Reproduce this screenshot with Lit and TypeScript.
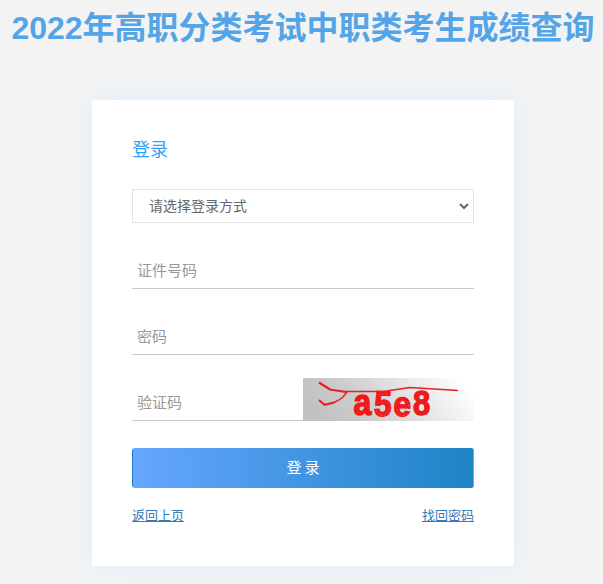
import { LitElement, html, css } from "lit";
import { customElement } from "lit/decorators.js";

@customElement("captcha-image")
class CaptchaImage extends LitElement {
  static styles = css`
    :host {
      display: block;
      width: 171px;
      height: 43px;
    }
    svg {
      display: block;
      overflow: visible;
    }
    .code {
      font-family: "Liberation Sans", Arial, sans-serif;
      font-weight: bold;
      fill: #f01818;
      stroke: #f01818;
      stroke-width: 1.2;
    }
    .speckle {
      stroke: #d8a0a0;
      stroke-width: 0.7;
      stroke-dasharray: 1 2.5;
      fill: none;
    }
    .scratch {
      stroke: #e82020;
      fill: none;
    }
  `;

  render() {
    return html`
      <svg width="171" height="43" viewBox="0 0 171 43">
        <defs>
          <linearGradient id="fade" x1="0" y1="0.3" x2="1" y2="0.1">
            <stop offset="0" stop-color="#c2c2c2" />
            <stop offset="0.25" stop-color="#cccccc" />
            <stop offset="0.6" stop-color="#e6e6e6" />
            <stop offset="0.95" stop-color="#ffffff" />
          </linearGradient>
        </defs>
        <rect width="171" height="43" fill="url(#fade)" />
        <g class="code">
          <text transform="translate(50.500 36.500) scale(1 1.180)" font-size="32">a</text>
          <text transform="translate(70.500 37.500) rotate(3) scale(1.050 1.180)" font-size="30">5</text>
          <text transform="translate(90 37.500) rotate(3) scale(1.050 1.150)" font-size="30">e</text>
          <text transform="translate(110 36.500) scale(1 1.150)" font-size="31">8</text>
        </g>
        <path class="speckle" d="M76 17l9-2M75 25l7-2 5 5-3 8-9 2M92 27l7-5 7 4-2 5-10 1 3 6 8-1M73 33l6 4" />
        <path class="scratch" stroke-width="2.200" d="M16 4.500L27 11.500L43 14" />
        <path class="scratch" stroke-width="1.500" d="M40 13.500H80L107 9.500L155 12.500" />
        <path class="scratch" stroke-width="2" d="M16 22l5.500 4.800L31 24.500" />
        <path class="scratch" stroke-width="1.400" d="M30 25l6-3 4-3 4-5" />
      </svg>
    `;
  }
}

@customElement("app-root")
class AppRoot extends LitElement {
  static styles = css`
    :host {
      display: flow-root;
      height: 584px;
      overflow: hidden;
      background: #f3f3f3;
      font-family: "Liberation Sans", "Noto Sans CJK SC", sans-serif;
      color: #666;
    }
    * {
      box-sizing: border-box;
    }
    .title {
      margin: 5px 0 0 3px;
      height: 46px;
      line-height: 46px;
      font-size: 32px;
      font-weight: bold;
      text-align: center;
      white-space: nowrap;
      color: #54a5e8;
    }
    .card {
      width: 422px;
      height: 466px;
      margin: 49px 0 0 92px;
      padding: 35px 40px 0;
      background: #fff;
      border-radius: 2px;
      box-shadow: 0 0 30px #deeeff;
    }
    .heading {
      margin: 0 0 24px;
      height: 30px;
      line-height: 30px;
      font-size: 18px;
      font-weight: 400;
      color: #379ff4;
    }
    .select {
      display: flex;
      align-items: center;
      justify-content: space-between;
      height: 34px;
      padding: 0 4px 0 16px;
      border: 1px solid #e2e4e4;
      font-size: 14px;
      line-height: 32px;
    }
    .field {
      display: flex;
      align-items: flex-end;
      height: 66px;
    }
    .input {
      display: block;
      flex: 1;
      min-width: 0;
      height: 36px;
      padding: 0 5px;
      border: 0;
      border-bottom: 1px solid #c8c8c8;
      border-radius: 0;
      outline: 0;
      background: none;
      font: 15px/35px "Liberation Sans", "Noto Sans CJK SC", sans-serif;
    }
    .input::placeholder {
      color: #999;
      opacity: 1;
    }
    .submit {
      display: block;
      width: 100%;
      height: 40px;
      margin-top: 27px;
      padding: 0;
      border: 1px solid transparent;
      border-radius: 3px;
      background-image: linear-gradient(90deg, #66a6ff, #1e84c6);
      color: #fff;
      font: 15px/38px "Liberation Sans", "Noto Sans CJK SC", sans-serif;
      word-spacing: -1px;
    }
    .links {
      display: flex;
      justify-content: space-between;
      margin-top: 18px;
      line-height: 20px;
      font-size: 13px;
    }
    .link {
      color: #337ab7;
      text-decoration: underline;
    }
  `;

  render() {
    return html`
      <h1 class="title">2022年高职分类考试中职类考生成绩查询</h1>
      <main class="card">
        <h2 class="heading">登录</h2>
        <div class="select">
          <span>请选择登录方式</span>
          <svg width="10" height="8" viewBox="0 0 10 8">
            <path d="M1 2l4 4 4-4" fill="none" stroke="#666" stroke-width="2" />
          </svg>
        </div>
        <div class="field"><input class="input" placeholder="证件号码" /></div>
        <div class="field"><input class="input" placeholder="密码" /></div>
        <div class="field">
          <input class="input" placeholder="验证码" />
          <captcha-image></captcha-image>
        </div>
        <button class="submit">登 录</button>
        <div class="links">
          <a class="link" href="#">返回上页</a>
          <a class="link" href="#">找回密码</a>
        </div>
      </main>
    `;
  }
}
